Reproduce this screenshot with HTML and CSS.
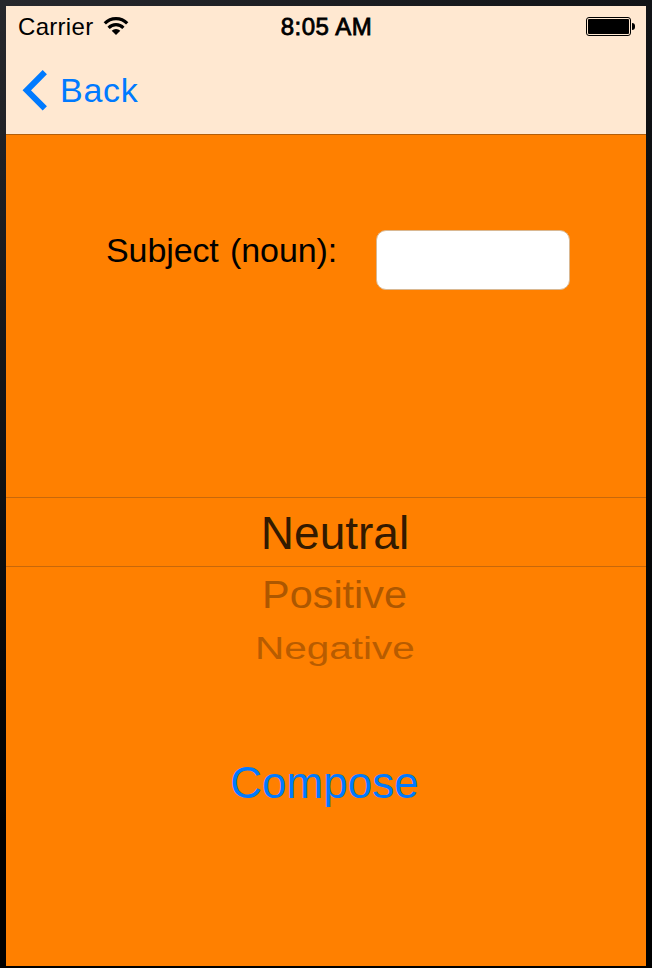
FILE: index.html
```html
<!DOCTYPE html>
<html lang="en">
<head>
    <meta charset="UTF-8">
    <meta name="viewport" content="width=device-width, initial-scale=1.0">
    <title>Compose</title>
    <link rel="stylesheet" href="styles.css">
</head>
<body>
    <div class="screen">
        <header class="top">
            <div class="status-bar">
                <div class="carrier">
                    <span>Carrier</span>
                    <svg class="wifi" width="26" height="20" viewBox="0 0 26 20">
                        <path d="M1.8 7.4A15.6 15.6 0 0 1 24.2 7.4" fill="none" stroke="#000" stroke-width="3.2"/>
                        <path d="M5.6 11.8A10.4 10.4 0 0 1 20.4 11.8" fill="none" stroke="#000" stroke-width="3.2"/>
                        <path d="M8.7 14.8A6.2 6.2 0 0 1 17.3 14.8L13 19Z"/>
                    </svg>
                </div>
                <span class="time">8:05 AM</span>
                <div class="battery">
                    <div class="battery-case"><div class="battery-level"></div></div>
                    <div class="battery-tip"></div>
                </div>
            </div>
            <nav class="nav-bar">
                <a class="back">
                    <svg width="26" height="42" viewBox="0 0 26 42">
                        <path d="M22.8 3.2L4.8 21.3L22.8 39.4" fill="none" stroke="#007aff" stroke-width="6"/>
                    </svg>
                    <span>Back</span>
                </a>
            </nav>
        </header>

        <main>
            <div class="subject-row">
                <label for="subject">Subject (noun):</label>
                <input type="text" id="subject">
            </div>

            <div class="picker">
                <div class="option selected"><span>Neutral</span></div>
                <div class="option positive"><span>Positive</span></div>
                <div class="option negative"><span>Negative</span></div>
            </div>

            <button class="compose">Compose</button>
        </main>
    </div>
</body>
</html>
```
FILE: styles.css
```css
* {
    margin: 0;
    padding: 0;
    box-sizing: border-box;
}

body {
    height: 968px;
    padding: 6px 6px 2px;
    background: linear-gradient(to bottom, rgba(0, 0, 0, 0), #000 85%), linear-gradient(to right, #27282d, #111316);
    font-family: "Liberation Sans", Arial, Helvetica, sans-serif;
    color: #000;
    overflow: hidden;
}

.screen {
    height: 960px;
    background-color: #ff8000;
}

.top {
    height: 129px;
    background-color: #ffe8d1;
    border-bottom: 1px solid #b35f0a;
}

/* Status bar */
.status-bar {
    display: grid;
    grid-template-columns: 1fr auto 1fr;
    height: 40px;
    padding: 0 11px 0 12px;
    font-size: 24px;
    line-height: 42px;
}

.carrier {
    display: flex;
    gap: 10px;
    letter-spacing: 0.3px;
}

.wifi {
    margin-top: 10px;
}

.time {
    letter-spacing: 0.5px;
    -webkit-text-stroke: 0.8px #000;
}

.battery {
    height: 41px;
    display: flex;
    align-items: center;
    justify-content: flex-end;
    gap: 1px;
}

.battery-case {
    width: 45px;
    height: 19px;
    padding: 1px;
    border: 1px solid #000;
    border-radius: 3px;
}

.battery-level {
    height: 100%;
    background-color: #000;
    border-radius: 1px;
}

.battery-tip {
    width: 3px;
    height: 7px;
    background-color: #000;
    border-radius: 0 3px 3px 0;
}

/* Navigation bar */
.nav-bar {
    height: 88px;
    display: flex;
    align-items: center;
    padding-left: 16px;
}

.back {
    display: flex;
    align-items: center;
    gap: 12px;
    font-size: 34px;
    letter-spacing: 0.7px;
    color: #007aff;
}

/* Form */
main {
    display: flex;
    flex-direction: column;
    align-items: center;
}

.subject-row {
    width: 100%;
    display: flex;
    align-items: flex-start;
    justify-content: space-between;
    padding: 95px 76px 0 100px;
}

label {
    font-size: 34px;
    line-height: 40px;
    letter-spacing: -0.1px;
    word-spacing: 2px;
    white-space: nowrap;
}

input {
    width: 194px;
    height: 60px;
    padding: 0 14px;
    border: 1px solid #d9b892;
    border-radius: 10px;
    background-color: #fff;
    font: inherit;
    font-size: 28px;
}

/* Picker wheel */
.picker {
    width: 100%;
    margin-top: 207px;
    text-align: center;
    font-size: 46px;
    padding-bottom: 85px;
}

.option {
    padding-left: 18px;
}

.option span {
    display: inline-block;
}

.selected {
    height: 70px;
    line-height: 70px;
    border-top: 1px solid #c8680a;
    border-bottom: 1px solid #c8680a;
    color: #331a00;
}

.positive {
    height: 56px;
    line-height: 54px;
    color: #ad5700;
}

.positive span {
    transform: scale(0.9, 0.86);
}

.negative {
    height: 50px;
    line-height: 50px;
    color: #b85c00;
}

.negative span {
    transform: scale(0.88, 0.68);
}

.compose {
    padding-right: 3px;
    border: none;
    background: none;
    font: inherit;
    font-size: 44px;
    line-height: 50px;
    color: #007aff;
}
```
